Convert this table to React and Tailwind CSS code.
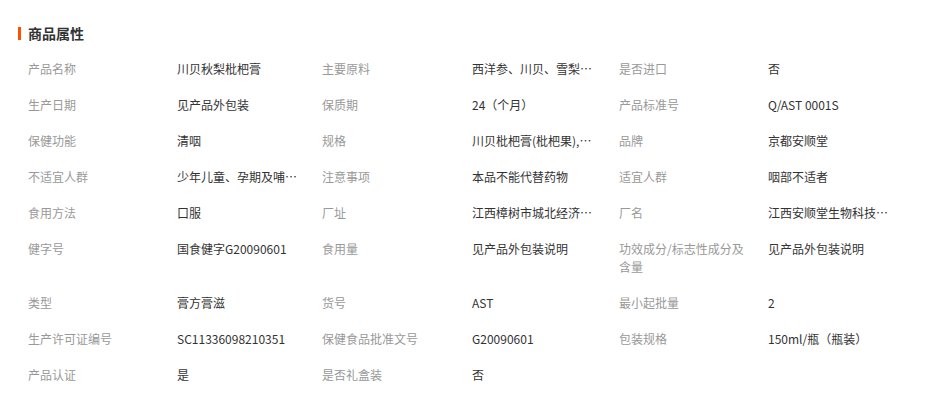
const attrs = [
    ["产品名称", "川贝秋梨枇杷膏"],
    ["主要原料", "西洋参、川贝、雪梨、枇杷叶、蜂蜜"],
    ["是否进口", "否"],
    ["生产日期", "见产品外包装"],
    ["保质期", "24（个月）"],
    ["产品标准号", "Q/AST 0001S"],
    ["保健功能", "清咽"],
    ["规格", "川贝枇杷膏(枇杷果),150ml/瓶"],
    ["品牌", "京都安顺堂"],
    ["不适宜人群", "少年儿童、孕期及哺乳期妇女"],
    ["注意事项", "本品不能代替药物"],
    ["适宜人群", "咽部不适者"],
    ["食用方法", "口服"],
    ["厂址", "江西樟树市城北经济技术开发区"],
    ["厂名", "江西安顺堂生物科技有限公司"],
    ["健字号", "国食健字G20090601"],
    ["食用量", "见产品外包装说明"],
    ["功效成分/标志性成分及含量", "见产品外包装说明"],
    ["类型", "膏方膏滋"],
    ["货号", "AST"],
    ["最小起批量", "2"],
    ["生产许可证编号", "SC11336098210351"],
    ["保健食品批准文号", "G20090601"],
    ["包装规格", "150ml/瓶（瓶装）"],
    ["产品认证", "是"],
    ["是否礼盒装", "否"],
];

const App = () => {
    return (
        <div
            className="w-[935px] h-[393px] bg-white overflow-hidden"
            style={{ fontFamily: '"Noto Sans CJK SC", "Noto Sans", sans-serif' }}
        >
            <div className="flex items-center pt-[23px] pl-[18px]">
                <span className="w-[3px] h-[13px] bg-[#ff5000]" />
                <h2 className="ml-[7px] text-[14px] leading-[20px] font-bold text-[#333]">商品属性</h2>
            </div>
            <div className="mt-[8px] pl-[28px] grid grid-cols-[149px_145px_150px_147px_149px_1fr] text-[12px] leading-[18px]">
                {attrs.map(([label, value]) => (
                    <div key={label} className="contents">
                        <div className="py-[9px] pr-[19px] text-[#999]">{label}</div>
                        <div className="py-[9px]">
                            <div className="max-w-[123px] truncate text-[#333]">{value}</div>
                        </div>
                    </div>
                ))}
            </div>
        </div>
    );
};

export default App;
